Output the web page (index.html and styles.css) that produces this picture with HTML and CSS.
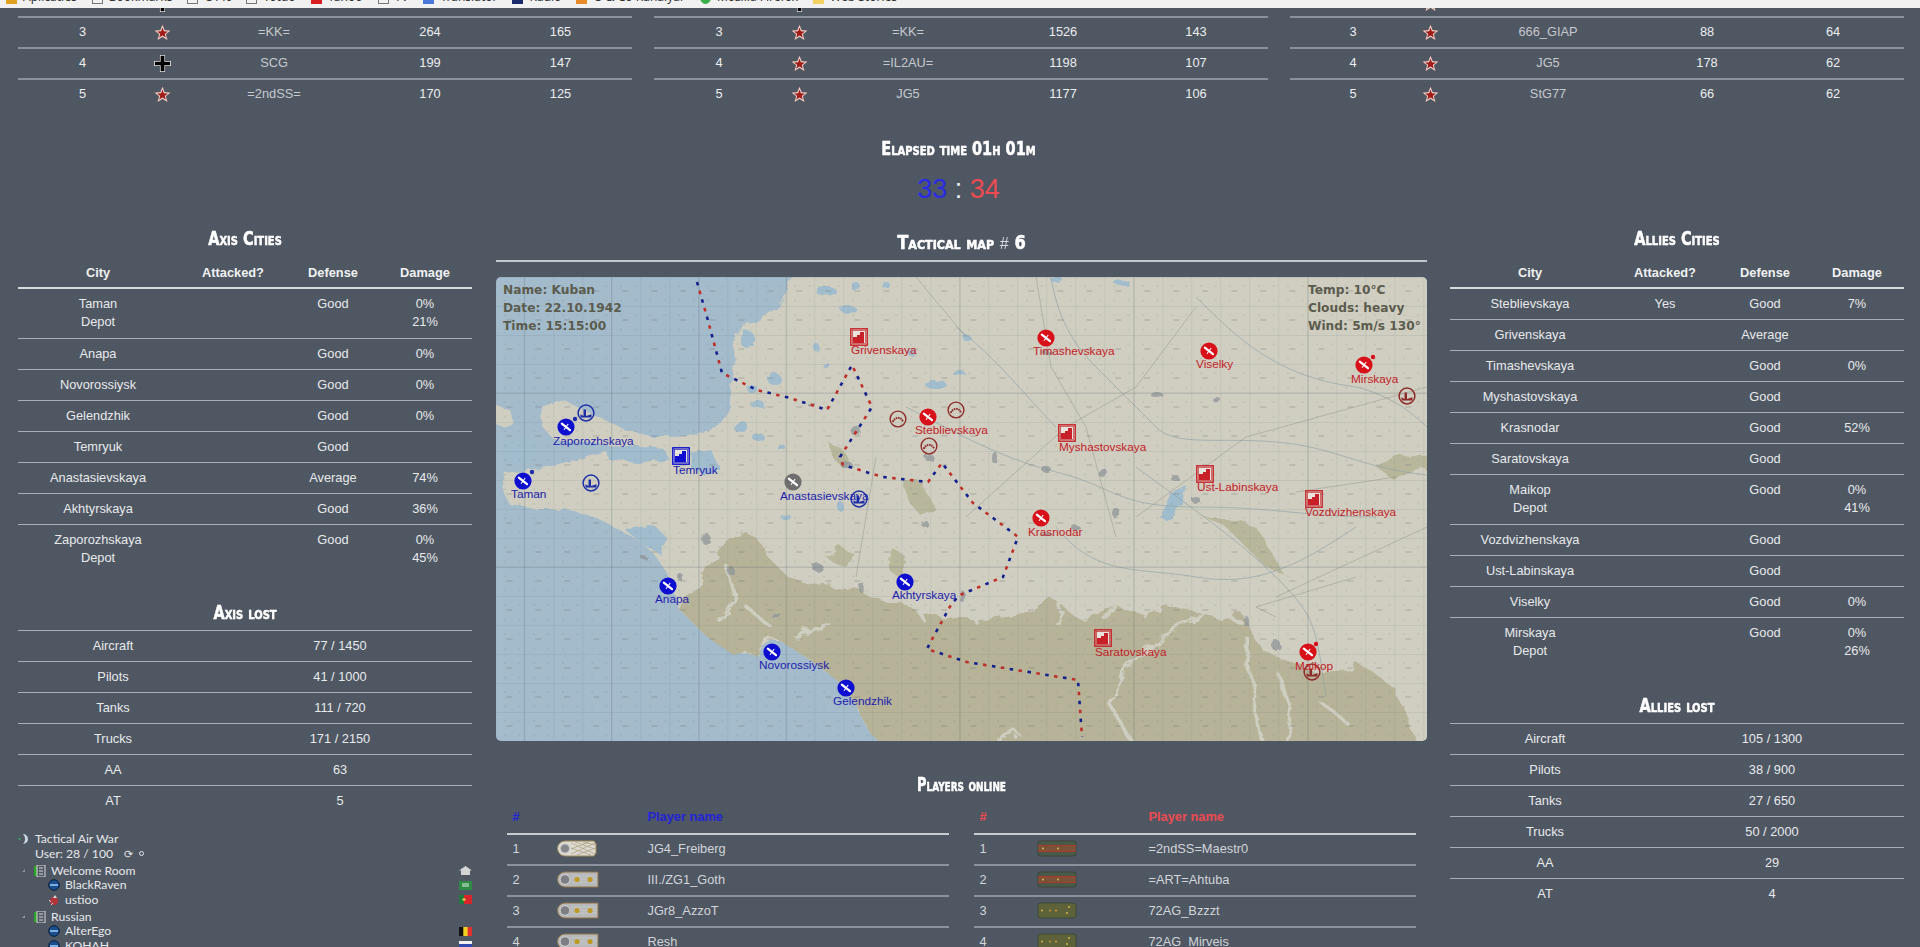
FILE: index.html
```html
<!DOCTYPE html>
<html lang="en">
<head>
<meta charset="utf-8">
<title>Tactical Air War</title>
<link rel="stylesheet" href="styles.css">
</head>
<body>
<svg class="defs" width="0" height="0" aria-hidden="true">
  <defs>
    <symbol id="star" viewBox="0 0 20 20"><path d="M10 .5 12.6 7.2 19.6 7.5 14.1 12 16 19.2 10 15.2 4 19.2 5.900 12 .4 7.5 7.400 7.200Z" fill="#f4eae6" stroke="#7a3a36" stroke-width=".4"/><path d="M10 4 11.700 8.600 16.400 8.800 12.700 11.700 14 16.200 10 13.500 6 16.200 7.300 11.700 3.600 8.800 8.300 8.600Z" fill="#a01c18"/></symbol>
    <symbol id="cross" viewBox="0 0 20 20"><path d="M7 0H13V7H20V13H13V20H7V13H0V7H7Z" fill="#e8e8e8"/><path d="M7.800 1H12.200V7.800H19V12.200H12.200V19H7.800V12.200H1V7.800H7.800Z" fill="#000"/></symbol>
    <symbol id="af" viewBox="-9 -9 18 18"><circle r="8.600" fill="currentColor"/><path d="M-4.200-3.400 4 3.200" stroke="#fff" stroke-width="2.200" stroke-linecap="round"/><path d="M-2 2.800 2.200-3" stroke="#fff" stroke-width="1.100"/></symbol>
    <symbol id="sq" viewBox="0 0 18 18"><rect x=".8" y=".8" width="16.400" height="16.400" fill="none" stroke="currentColor" stroke-width="1.400"/><rect x="2.600" y="2.600" width="12.800" height="12.800" fill="#e8e4dc" stroke="currentColor" stroke-width=".6"/><path d="M3 15V9H7V7H10V4H14V15Z" fill="currentColor"/></symbol>
    <symbol id="depot" viewBox="-9 -9 18 18"><circle r="7.900" fill="none" stroke="currentColor" stroke-width="1.500"/><path d="M-5.500 4.500V1.200L-2.500 3V-3.500H0V3L5.500 1.200V4.500Z" fill="currentColor"/></symbol>
    <symbol id="ring" viewBox="-9 -9 18 18"><circle r="7.900" fill="none" stroke="currentColor" stroke-width="1.400"/><path d="M-5.200 2.800C-3-2.500 3-2.500 5.200 2.800" fill="none" stroke="currentColor" stroke-width="2" stroke-dasharray="1.600 .7"/></symbol>
    <symbol id="r-de0" viewBox="0 0 42 17"><path d="M8 1H37L39 4V13L37 16H8A7.500 7.500 0 0 1 8 1Z" fill="#dcdad2" stroke="#9c8758"/><circle cx="8" cy="8.500" r="4.500" fill="#85878b" stroke="#c8c8c8"/><path d="M14 3 38 14M14 8 34 15M18 2 38 9M26 2 38 5M14 14 38 3M14 9 32 2M20 15 38 8" stroke="#a89c78" stroke-width=".7"/></symbol>
    <symbol id="r-de1" viewBox="0 0 42 17"><path d="M8 1H41V16H8A7.500 7.500 0 0 1 8 1Z" fill="#b8b9ba" stroke="#8f7348"/><circle cx="8" cy="8.500" r="4.800" fill="#7d7f84" stroke="#d0d0d0"/><path d="M15 5H40M15 8H40M15 11H40" stroke="#cfcfcf" stroke-width=".6"/><circle cx="20" cy="8.500" r="2.600" fill="#bd9a26"/><circle cx="33" cy="8.500" r="2.600" fill="#bd9a26"/></symbol>
    <symbol id="r-ru0" viewBox="0 0 42 17"><path d="M2 2 5 1H37L40 2V15L37 16H5L2 15Z" fill="#4a5a49" stroke="#3a463a"/><rect x="2" y="5.500" width="38" height="6" fill="#7a5238"/><path d="M2 5.500H40M2 11.500H40" stroke="#a83a2c" stroke-width="1.200"/><circle cx="7" cy="8.500" r="1" fill="#d4b450"/><circle cx="22" cy="8.500" r="1" fill="#d4b450"/></symbol>
    <symbol id="r-ru1" viewBox="0 0 42 17"><path d="M2 2 5 1H37L40 2V15L37 16H5L2 15Z" fill="#5e6239" stroke="#3e4a3c"/><circle cx="6" cy="8.500" r="1" fill="#d4b450"/><circle cx="14" cy="8.500" r="1" fill="#c89a40"/><circle cx="20" cy="8.500" r="1" fill="#c89a40"/><circle cx="31" cy="11" r="1" fill="#d4b450"/><circle cx="33" cy="5" r="1" fill="#d4b450"/></symbol>
    <symbol id="ts-room" viewBox="0 0 12 12"><rect x="0" y="1" width="3" height="10" fill="#2aa52a"/><rect x="3" y="0" width="8" height="12" fill="none" stroke="#dcdcdc"/><path d="M5 3H9M5 6H9M5 9H9" stroke="#dcdcdc"/></symbol>
    <symbol id="ts-user" viewBox="0 0 12 12"><circle cx="6" cy="6" r="5.300" fill="#1a4e8e" stroke="#0a1e3e"/><rect x="2" y="5" width="8" height="2" fill="#7eb0e0"/></symbol>
    <symbol id="ts-bug" viewBox="0 0 12 12"><circle cx="6" cy="7" r="4" fill="#b4343c"/><path d="M7 1 9 4 5 4Z" fill="#d8d8d8"/><path d="M1 6 3 8M3 11 5 9" stroke="#d8d8d8"/></symbol>
  </defs>
</svg>

<div class="chrome">
  <div class="bookmarks">
    <i class="mark m-apps"></i><span>Aplicaties</span>
    <i class="mark m-grey"></i><span>Bookmarks</span>
    <i class="mark m-grey"></i><span>OTTI</span>
    <i class="mark m-grey"></i><span>Yotuo</span>
    <i class="mark m-red"></i><span>Yahoo</span>
    <i class="mark m-grey"></i><span>TV</span>
    <i class="mark m-blue"></i><span>Translator</span>
    <i class="mark m-navy"></i><span>Radio</span>
    <i class="mark m-orange"></i><span>O &amp; Co Kanalyar</span>
    <i class="mark m-green"></i><span>Mozilla Firefox</span>
    <i class="mark m-yellow"></i><span>Web Stories</span>
  </div>
</div>

<section class="top-tables">
  <table class="rank t1">
    <colgroup><col class="c1"><col class="c2"><col class="c3"><col class="c4"><col class="c5"></colgroup>
    <tr class="peek"><td></td><td><div class="peek-box"><svg class="flag"><use href="#cross"/></svg></div></td><td></td><td></td><td></td></tr>
    <tr><td>3</td><td><svg class="flag"><use href="#star"/></svg></td><td class="dim">=KK=</td><td>264</td><td>165</td></tr>
    <tr><td>4</td><td><svg class="flag"><use href="#cross"/></svg></td><td class="dim">SCG</td><td>199</td><td>147</td></tr>
    <tr><td>5</td><td><svg class="flag"><use href="#star"/></svg></td><td class="dim">=2ndSS=</td><td>170</td><td>125</td></tr>
  </table>
  <table class="rank t2">
    <colgroup><col class="c1"><col class="c2"><col class="c3"><col class="c4"><col class="c5"></colgroup>
    <tr class="peek"><td></td><td><div class="peek-box"><svg class="flag"><use href="#cross"/></svg></div></td><td></td><td></td><td></td></tr>
    <tr><td>3</td><td><svg class="flag"><use href="#star"/></svg></td><td class="dim">=KK=</td><td>1526</td><td>143</td></tr>
    <tr><td>4</td><td><svg class="flag"><use href="#star"/></svg></td><td class="dim">=IL2AU=</td><td>1198</td><td>107</td></tr>
    <tr><td>5</td><td><svg class="flag"><use href="#star"/></svg></td><td class="dim">JG5</td><td>1177</td><td>106</td></tr>
  </table>
  <table class="rank t3">
    <colgroup><col class="c1"><col class="c2"><col class="c3"><col class="c4"><col class="c5"></colgroup>
    <tr class="peek"><td></td><td><div class="peek-box"><svg class="flag"><use href="#star"/></svg></div></td><td></td><td></td><td></td></tr>
    <tr><td>3</td><td><svg class="flag"><use href="#star"/></svg></td><td class="dim">666_GIAP</td><td>88</td><td>64</td></tr>
    <tr><td>4</td><td><svg class="flag"><use href="#star"/></svg></td><td class="dim">JG5</td><td>178</td><td>62</td></tr>
    <tr><td>5</td><td><svg class="flag"><use href="#star"/></svg></td><td class="dim">StG77</td><td>66</td><td>62</td></tr>
  </table>
</section>

<section class="elapsed">
  <h2 class="head">Elapsed time 01h 01m</h2>
  <div class="score"><span class="s-blue">33</span> : <span class="s-red">34</span></div>
</section>

<main class="board">
  <aside class="side">
    <h2 class="head side-head">Axis Cities</h2>
    <table class="cities">
      <colgroup><col class="k1"><col class="k2"><col class="k3"><col class="k4"></colgroup>
      <tr><th>City</th><th>Attacked?</th><th>Defense</th><th>Damage</th></tr>
      <tr class="double"><td>Taman<br>Depot</td><td></td><td>Good</td><td>0%<br>21%</td></tr>
      <tr><td>Anapa</td><td></td><td>Good</td><td>0%</td></tr>
      <tr><td>Novorossiysk</td><td></td><td>Good</td><td>0%</td></tr>
      <tr><td>Gelendzhik</td><td></td><td>Good</td><td>0%</td></tr>
      <tr><td>Temryuk</td><td></td><td>Good</td><td></td></tr>
      <tr><td>Anastasievskaya</td><td></td><td>Average</td><td>74%</td></tr>
      <tr><td>Akhtyrskaya</td><td></td><td>Good</td><td>36%</td></tr>
      <tr class="double"><td>Zaporozhskaya<br>Depot</td><td></td><td>Good</td><td>0%<br>45%</td></tr>
    </table>
    <h2 class="head lost-head">Axis lost</h2>
    <table class="lost">
      <colgroup><col class="l1"><col class="l2"></colgroup>
      <tr><td>Aircraft</td><td>77 / 1450</td></tr>
      <tr><td>Pilots</td><td>41 / 1000</td></tr>
      <tr><td>Tanks</td><td>111 / 720</td></tr>
      <tr><td>Trucks</td><td>171 / 2150</td></tr>
      <tr><td>AA</td><td>63</td></tr>
      <tr><td>AT</td><td>5</td></tr>
    </table>
    <div class="ts">
      <div class="ts-row ts-l0"><svg class="ts-ico ts-logo" viewBox="0 0 12 12"><circle cx="1.500" cy="6" r="1" fill="#39b36a"/><path d="M5 1A5 5 0 0 1 5 11A7 7 0 0 0 5 1Z" fill="#c9d6e4"/></svg>Tactical Air War</div>
      <div class="ts-row ts-user">User: 28 / 100<span class="ts-refresh">&#10227;</span><span class="ts-dot"></span></div>
      <div class="ts-row ts-l1 ts-room"><span class="ts-arrow"></span><svg class="ts-ico"><use href="#ts-room"/></svg>Welcome Room<svg class="ts-flag" viewBox="0 0 13 9"><path d="M6.500 0 13 4.500H11V9H2V4.500H0Z" fill="#d4d4d4"/></svg></div>
      <div class="ts-row ts-l2"><svg class="ts-ico"><use href="#ts-user"/></svg>BlackRaven<svg class="ts-flag" viewBox="0 0 13 9"><rect width="13" height="9" fill="#2f8a46"/><path d="M3 3H10M3 5H10" stroke="#dfeee0"/></svg></div>
      <div class="ts-row ts-l2"><svg class="ts-ico"><use href="#ts-bug"/></svg>ustioo<svg class="ts-flag" viewBox="0 0 13 9"><rect width="13" height="9" fill="#d8262c"/><rect width="5" height="9" fill="#1f7a3c"/><circle cx="5" cy="4.500" r="1.600" fill="#e0c040"/></svg></div>
      <div class="ts-row ts-l1 ts-room"><span class="ts-arrow"></span><svg class="ts-ico"><use href="#ts-room"/></svg>Russian</div>
      <div class="ts-row ts-l2"><svg class="ts-ico"><use href="#ts-user"/></svg>AlterEgo<svg class="ts-flag" viewBox="0 0 13 9"><rect width="13" height="9" fill="#e03030"/><rect width="8.600" height="9" fill="#f0d020"/><rect width="4.300" height="9" fill="#111"/></svg></div>
      <div class="ts-row ts-l2"><svg class="ts-ico"><use href="#ts-user"/></svg>KOHAH<svg class="ts-flag" viewBox="0 0 13 9"><rect width="13" height="9" fill="#d83030"/><rect width="13" height="6" fill="#3048b0"/><rect width="13" height="3" fill="#f0f0f0"/></svg></div>
    </div>
  </aside>

  <section class="center">
    <h2 class="head map-head">Tactical map <span class="hash">#</span> 6</h2>
    <div class="rule"></div>
    <div class="map">
      <svg class="map-svg" viewBox="0 0 931 464" width="931" height="464" xmlns="http://www.w3.org/2000/svg">
        <defs>
          <pattern id="grid" x="28.300" y="29" width="29" height="29" patternUnits="userSpaceOnUse">
            <path d="M0 0V29M0 0H29" fill="none" stroke="#5c6a70" stroke-opacity=".22"/>
            <rect x="11" y="13" width="6" height="2" fill="#6a7070" fill-opacity=".2"/>
          </pattern>
          <pattern id="dots" x="7" y="7" width="14.500" height="14.500" patternUnits="userSpaceOnUse">
            <circle cx="2" cy="2" r=".55" fill="#4a5656" fill-opacity=".4"/>
          </pattern>
          <filter id="rough" x="-5%" y="-5%" width="110%" height="110%">
            <feTurbulence type="fractalNoise" baseFrequency=".045" numOctaves="4" seed="7" result="n"/>
            <feDisplacementMap in="SourceGraphic" in2="n" scale="16"/>
          </filter>
          <filter id="fine" x="-5%" y="-5%" width="110%" height="110%">
            <feTurbulence type="fractalNoise" baseFrequency=".09" numOctaves="3" seed="3" result="n"/>
            <feDisplacementMap in="SourceGraphic" in2="n" scale="7"/>
            <feGaussianBlur stdDeviation=".35"/>
          </filter>
        </defs>
        <rect class="sea" width="931" height="464"/>
        <g filter="url(#fine)">
          <path class="land" d="M299-6 287 23Q274 40 247 50L237 63 239 83 234 110 234 133 224 150 201 156 181 160 154 160 127 152 94 136 67 123 47 131 45 148 58 163 100 166 125 170 100 178 70 185 44 192 10 196 6 212 14 228 40 232 70 232 100 240 111 246 140 262 157 276 171 296 184 333 207 356 234 375 261 378 271 363 284 363 314 383 341 403 357 423 374 456 394 470H937V-6Z"/>
          <path class="land" d="M-5 126 15 134 18 146 6 150-5 146Z"/>
        </g>
        <g filter="url(#rough)">
          <path class="tan" d="M184 333 186 320 200 318 212 290 228 268 246 252 262 262 272 280 292 300 320 308 360 312 400 328 440 340 490 342 530 338 555 322 590 346 620 328 650 338 680 328 720 342 745 335 765 372 800 388 830 398 860 384 900 412 925 475H394L374 456 357 423 341 403 314 383 284 363 271 363 261 378 234 375 207 356Z"/>
          <path class="tan-soft" d="M335 168 350 176 356 190 346 190 336 180Z"/>
          <path class="tan-soft" d="M408 205 428 205 438 232 424 238 412 224Z"/>
          <path class="tan-soft" d="M880 190 905 180 935 178 935 190 895 200Z"/>
          <path class="tan-soft" d="M395 270 410 280 405 300 392 292Z"/>
          <path class="tan-soft" d="M330 280 345 270 360 278 350 290Z"/>
          <path class="tan-soft" d="M700 235 760 250 790 300 770 290 730 250Z"/>
        </g>
        <g class="water" filter="url(#fine)">
          <path d="M110 172 138 168 168 172 172 182 140 186 112 182Z"/>
          <path d="M194 176 214 172 224 190 208 198 196 192Z"/>
          <path d="M128 252 160 250 172 262 165 278 150 270Z"/>
          <path d="M10 166 36 160 44 176 22 190 8 182Z"/>
          <path d="M664 240 678 214 690 208 686 226 672 244Z"/>
          <ellipse cx="330" cy="14" rx="10" ry="5"/><ellipse cx="352" cy="32" rx="8" ry="4"/><ellipse cx="360" cy="10" rx="4" ry="5"/>
          <ellipse cx="251" cy="62" rx="7" ry="9"/><ellipse cx="278" cy="102" rx="7" ry="6"/><ellipse cx="256" cy="112" rx="5" ry="4"/><ellipse cx="262" cy="128" rx="7" ry="4"/>
          <ellipse cx="320" cy="70" rx="3" ry="4"/><ellipse cx="330" cy="88" rx="3" ry="3"/>
          <ellipse cx="440" cy="108" rx="11" ry="4"/><ellipse cx="462" cy="95" rx="6" ry="3"/>
          <ellipse cx="390" cy="8" rx="4" ry="3"/><ellipse cx="626" cy="6" rx="8" ry="3"/><ellipse cx="560" cy="2" rx="6" ry="3"/>
          <ellipse cx="290" cy="240" rx="5" ry="3"/><ellipse cx="345" cy="230" rx="3" ry="5"/>
          <ellipse cx="245" cy="150" rx="8" ry="5"/><ellipse cx="262" cy="160" rx="6" ry="4"/><ellipse cx="285" cy="170" rx="4" ry="3"/>
          <ellipse cx="470" cy="60" rx="4" ry="3"/><ellipse cx="415" cy="75" rx="5" ry="3"/>
        </g>
        <g class="rivers-light" filter="url(#rough)">
          <path d="M540 330 548 310 535 290M560 345 575 318 570 290M612 345 628 310 622 290M650 340 660 315M700 350 715 330 745 345M770 470 758 420 750 360M790 470 795 430 780 395M640 470 612 425 630 395 665 360 700 345M480 345 470 325M430 345 420 330M850 445 825 425M500 470 520 455M225 345 240 320 232 290M250 330 275 350M300 360 330 345"/>
        </g>
        <g class="rivers">
          <path d="M555 0C560 30 570 60 600 90S640 130 660 150 720 160 780 165 860 190 931 198"/>
          <path d="M640 190C680 220 740 260 780 300S820 350 830 420"/>
          <path d="M410 130C450 150 500 180 560 195S620 230 700 230 810 240 880 240"/>
          <path d="M460 50C500 80 530 120 560 150M700 20C740 60 780 100 860 110 900 120 920 140 931 150"/>
          <path d="M560 250C600 300 640 290 700 300 760 310 800 290 860 250"/>
        </g>
        <g class="roads">
          <path d="M540 0 555 90 590 150 620 260M360 300 380 180M640 240 750 160 931 110M700 30 640 110 570 150 470 240M780 320 931 250M780 340 760 330 860 300M420 0 470 60M900 200 800 215"/>
        </g>
        <g class="towns" filter="url(#fine)">
          <ellipse cx="552" cy="76" rx="6" ry="2"/><ellipse cx="660" cy="117" rx="6" ry="3"/><ellipse cx="720" cy="122" rx="4" ry="2"/>
          <ellipse cx="498" cy="180" rx="3" ry="6"/><ellipse cx="550" cy="192" rx="5" ry="3"/><ellipse cx="607" cy="196" rx="4" ry="5"/><ellipse cx="679" cy="201" rx="4" ry="3"/>
          <ellipse cx="360" cy="154" rx="5" ry="5"/><ellipse cx="351" cy="188" rx="6" ry="3"/><ellipse cx="317" cy="129" rx="4" ry="2"/>
          <ellipse cx="433" cy="180" rx="5" ry="3"/><ellipse cx="467" cy="320" rx="3" ry="6"/><ellipse cx="750" cy="344" rx="3" ry="5"/>
          <ellipse cx="780" cy="368" rx="5" ry="5"/><ellipse cx="322" cy="291" rx="5" ry="5"/><ellipse cx="365" cy="310" rx="4" ry="4"/>
          <ellipse cx="210" cy="262" rx="4" ry="6"/><ellipse cx="147" cy="280" rx="3" ry="2"/><ellipse cx="184" cy="300" rx="3" ry="4"/>
          <ellipse cx="235" cy="294" rx="3" ry="5"/><ellipse cx="280" cy="338" rx="5" ry="2"/><ellipse cx="551" cy="258" rx="6" ry="2"/><ellipse cx="580" cy="251" rx="4" ry="3"/>
          <ellipse cx="620" cy="236" rx="4" ry="5"/><ellipse cx="428" cy="246" rx="4" ry="3"/><ellipse cx="700" cy="223" rx="5" ry="3"/>
        </g>
        <rect width="931" height="464" fill="url(#grid)"/>
        <rect width="931" height="464" fill="url(#dots)"/>
        <g class="grid-major">
          <path d="M115.700 0V464M290.700 0V464M464 0V464M638 0V464M812 0V464M28.300 0V464M203 0V464M0 116H931M0 290H931"/>
        </g>
        <polyline class="front f-blue" points="201,5 211,40 226,96 261,113 294,121 331,133 356,88 376,130 344,180 347,188 387,200 432,205 446,186 477,226 517,256 522,260 507,300 464,318 456,326 434,366 431,372 471,385 582,403 586,460"/>
        <polyline class="front f-red" points="201,5 211,40 226,96 261,113 294,121 331,133 356,88 376,130 344,180 347,188 387,200 432,205 446,186 477,226 517,256 522,260 507,300 464,318 456,326 434,366 431,372 471,385 582,403 586,460"/>

        <g class="axis">
          <use href="#depot" x="81" y="127" width="18" height="18"/>
          <use href="#depot" x="86" y="197" width="18" height="18"/>
          <use href="#depot" x="354" y="213" width="18" height="18"/>
          <circle cx="79" cy="142" r="2.200" fill="currentColor"/>
          <circle cx="36" cy="195" r="2.200" fill="currentColor"/>
          <use class="axis-bright" href="#af" x="61" y="141" width="18" height="18"/>
          <use class="axis-bright" href="#af" x="18" y="195" width="18" height="18"/>
          <use class="axis-bright" href="#af" x="163" y="300" width="18" height="18"/>
          <use class="axis-bright" href="#af" x="267" y="366" width="18" height="18"/>
          <use class="axis-bright" href="#af" x="341" y="402" width="18" height="18"/>
          <use class="axis-bright" href="#af" x="400" y="296" width="18" height="18"/>
          <use class="neutral" href="#af" x="288" y="196" width="18" height="18"/>
          <use class="axis-bright" href="#sq" x="176" y="170" width="18" height="18"/>
          <text x="57" y="168">Zaporozhskaya</text>
          <text x="15" y="221">Taman</text>
          <text x="177" y="197">Temryuk</text>
          <text x="284" y="223">Anastasievskaya</text>
          <text x="159" y="326">Anapa</text>
          <text x="263" y="392">Novorossiysk</text>
          <text x="337" y="428">Gelendzhik</text>
          <text x="396" y="322">Akhtyrskaya</text>
        </g>
        <g class="allies">
          <use class="dark-red" href="#ring" x="393" y="133" width="18" height="18"/>
          <use class="dark-red" href="#ring" x="451" y="124" width="18" height="18"/>
          <use class="dark-red" href="#ring" x="424" y="160" width="18" height="18"/>
          <use class="dark-red" href="#depot" x="902" y="110" width="18" height="18"/>
          <use class="dark-red" href="#depot" x="807" y="386" width="18" height="18"/>
          <circle cx="877" cy="80" r="2.200" fill="currentColor"/>
          <circle cx="820" cy="367" r="2.200" fill="currentColor"/>
          <use href="#af" x="423" y="131" width="18" height="18"/>
          <use href="#af" x="541" y="52" width="18" height="18"/>
          <use href="#af" x="704" y="65" width="18" height="18"/>
          <use href="#af" x="859" y="79" width="18" height="18"/>
          <use href="#af" x="536" y="232" width="18" height="18"/>
          <use href="#af" x="803" y="366" width="18" height="18"/>
          <use class="sq-red" href="#sq" x="354" y="51" width="18" height="18"/>
          <use class="sq-red" href="#sq" x="562" y="147" width="18" height="18"/>
          <use class="sq-red" href="#sq" x="700" y="188" width="18" height="18"/>
          <use class="sq-red" href="#sq" x="809" y="213" width="18" height="18"/>
          <use class="sq-red" href="#sq" x="598" y="352" width="18" height="18"/>
          <text x="355" y="77">Grivenskaya</text>
          <text x="419" y="157">Steblievskaya</text>
          <text x="537" y="78">Timashevskaya</text>
          <text x="700" y="91">Viselky</text>
          <text x="855" y="106">Mirskaya</text>
          <text x="563" y="174">Myshastovskaya</text>
          <text x="701" y="214">Ust-Labinskaya</text>
          <text x="809" y="239">Vozdvizhenskaya</text>
          <text x="532" y="259">Krasnodar</text>
          <text x="599" y="379">Saratovskaya</text>
          <text x="799" y="393">Maikop</text>
        </g>
        <g class="wx">
          <text x="7" y="17">Name: Kuban</text>
          <text x="7" y="35">Date: 22.10.1942</text>
          <text x="7" y="53">Time: 15:15:00</text>
          <text x="812" y="17">Temp: 10°C</text>
          <text x="812" y="35">Clouds: heavy</text>
          <text x="812" y="53">Wind: 5m/s 130°</text>
        </g>
      </svg>
    </div>
    <h2 class="head players-head">Players online</h2>
    <div class="players">
      <table class="roster ro-axis">
        <colgroup><col class="p1"><col class="p2"><col></colgroup>
        <tr><th>#</th><th></th><th>Player name</th></tr>
        <tr><td>1</td><td><svg class="board-ico"><use href="#r-de0"/></svg></td><td>JG4_Freiberg</td></tr>
        <tr><td>2</td><td><svg class="board-ico"><use href="#r-de1"/></svg></td><td>III./ZG1_Goth</td></tr>
        <tr><td>3</td><td><svg class="board-ico"><use href="#r-de1"/></svg></td><td>JGr8_AzzoT</td></tr>
        <tr><td>4</td><td><svg class="board-ico"><use href="#r-de1"/></svg></td><td>Resh</td></tr>
      </table>
      <table class="roster ro-allies">
        <colgroup><col class="p1"><col class="p2"><col></colgroup>
        <tr><th>#</th><th></th><th>Player name</th></tr>
        <tr><td>1</td><td><svg class="board-ico"><use href="#r-ru0"/></svg></td><td>=2ndSS=Maestr0</td></tr>
        <tr><td>2</td><td><svg class="board-ico"><use href="#r-ru0"/></svg></td><td>=ART=Ahtuba</td></tr>
        <tr><td>3</td><td><svg class="board-ico"><use href="#r-ru1"/></svg></td><td>72AG_Bzzzt</td></tr>
        <tr><td>4</td><td><svg class="board-ico"><use href="#r-ru1"/></svg></td><td>72AG_Mirveis</td></tr>
      </table>
    </div>
  </section>

  <aside class="side">
    <h2 class="head side-head">Allies Cities</h2>
    <table class="cities">
      <colgroup><col class="k1"><col class="k2"><col class="k3"><col class="k4"></colgroup>
      <tr><th>City</th><th>Attacked?</th><th>Defense</th><th>Damage</th></tr>
      <tr><td>Steblievskaya</td><td>Yes</td><td>Good</td><td>7%</td></tr>
      <tr><td>Grivenskaya</td><td></td><td>Average</td><td></td></tr>
      <tr><td>Timashevskaya</td><td></td><td>Good</td><td>0%</td></tr>
      <tr><td>Myshastovskaya</td><td></td><td>Good</td><td></td></tr>
      <tr><td>Krasnodar</td><td></td><td>Good</td><td>52%</td></tr>
      <tr><td>Saratovskaya</td><td></td><td>Good</td><td></td></tr>
      <tr class="double"><td>Maikop<br>Depot</td><td></td><td>Good</td><td>0%<br>41%</td></tr>
      <tr><td>Vozdvizhenskaya</td><td></td><td>Good</td><td></td></tr>
      <tr><td>Ust-Labinskaya</td><td></td><td>Good</td><td></td></tr>
      <tr><td>Viselky</td><td></td><td>Good</td><td>0%</td></tr>
      <tr class="double"><td>Mirskaya<br>Depot</td><td></td><td>Good</td><td>0%<br>26%</td></tr>
    </table>
    <h2 class="head lost-head">Allies lost</h2>
    <table class="lost">
      <colgroup><col class="l1"><col class="l2"></colgroup>
      <tr><td>Aircraft</td><td>105 / 1300</td></tr>
      <tr><td>Pilots</td><td>38 / 900</td></tr>
      <tr><td>Tanks</td><td>27 / 650</td></tr>
      <tr><td>Trucks</td><td>50 / 2000</td></tr>
      <tr><td>AA</td><td>29</td></tr>
      <tr><td>AT</td><td>4</td></tr>
    </table>
  </aside>
</main>
</body>
</html>
```
FILE: styles.css
```css
* { box-sizing: border-box; }
html, body { margin: 0; height: 947px; overflow: hidden; }
body {
  background: #4f5763;
  color: #eceeef;
  font: 12.8px/18px "Liberation Sans", Arial, sans-serif;
}
.defs { position: absolute; }
table { border-collapse: separate; border-spacing: 0; table-layout: fixed; width: 100%; }
td, th { padding: 0; text-align: center; vertical-align: top; }

/* browser bookmark strip, cut off by the page */
.chrome { height: 8px; background: #f1f1f1; overflow: hidden; }
.bookmarks {
  display: flex; align-items: center; gap: 6px;
  margin: -11px 0 0 6px; height: 16px;
  font: 12px/16px "Noto Sans", sans-serif; color: #333;
}
.bookmarks span { margin-right: 9px; }
.mark { width: 11px; height: 13px; display: block; background: #999; }
.m-apps { background: #e0a020; }
.m-grey { background: transparent; border: 1px solid #777; }
.m-red { background: #d81e1e; }
.m-blue { background: #4a78d8; }
.m-navy { background: #1a2a6a; }
.m-orange { background: #e88a2a; }
.m-green { background: #3ab04a; border-radius: 50%; }
.m-yellow { background: #f3d060; }

/* top ranking tables */
.top-tables { display: grid; grid-template-columns: repeat(3, 1fr); gap: 22px; padding: 0 16px 0 18px; }
.rank td { height: 31px; padding-top: 5px; border-bottom: 2px solid #8b929d; line-height: 18px; color: #eceeef; }
.rank tr:last-child td { border-bottom: 0; }
.rank td.dim { color: #c6c9cd; }
.rank .peek td { height: 10px; padding: 0; }
.peek-box { height: 8px; overflow: hidden; position: relative; }
.peek-box .flag { position: absolute; left: 50%; margin-left: -8px; top: -14px; }
.flag { width: 17px; height: 17px; display: block; margin: 1px auto 0; }
.t1 .c1 { width: 129px; } .t1 .c2 { width: 30px; } .t1 .c3 { width: 194px; } .t1 .c4 { width: 118px; }
.t2 .c1 { width: 130px; } .t2 .c2 { width: 30px; } .t2 .c3 { width: 188px; } .t2 .c4 { width: 122px; }
.t3 .c1 { width: 126px; } .t3 .c2 { width: 28px; } .t3 .c3 { width: 208px; } .t3 .c4 { width: 110px; }

/* headings: a squeezed heavy small-caps face */
.head {
  margin: 0; text-align: center; color: #fff;
  font: bold 19px/22px "DejaVu Sans Condensed", sans-serif;
  font-variant: small-caps;
  -webkit-text-stroke: .5px #fff;
  transform: scaleX(.85);
}
.hash { font-family: "Liberation Sans", sans-serif; font-weight: normal; color: #d8dade; -webkit-text-stroke: 0; font-size: 17px; }

.elapsed { text-align: center; margin-top: 26px; padding-right: 3px; }
.score { margin-top: 15px; font-size: 27px; line-height: 30px; color: #eceeef; }
.s-blue { color: #2a2ae6; }
.s-red { color: #ee4a52; }

/* three-column board */
.board {
  display: grid; grid-template-columns: 454px 931px 454px;
  padding: 0 16px 0 18px; margin-top: 20px; align-items: start;
  justify-content: space-between;
}
.side-head { margin-top: 3px; }
.cities { margin-top: 7px; }
.cities th { height: 33px; padding-top: 8px; font-weight: bold; color: #f0f1f2; border-bottom: 2px solid #d8dbde; }
.cities td { padding: 6px 0; border-bottom: 1px solid #a9aeb6; color: #e8eaec; }
.cities tr.double td { padding-bottom: 7px; }
.cities tr:last-child td { border-bottom: 0; }
.k1 { width: 160px; } .k2 { width: 110px; } .k3 { width: 90px; }
.lost-head { margin-top: 27px; }
.lost { margin-top: 7px; border-top: 1px solid #a9aeb6; }
.lost td { padding: 6px 0; border-bottom: 1px solid #a9aeb6; color: #e8eaec; }
.lost tr:last-child td { border-bottom: 0; }
.l1 { width: 190px; }

/* voice server tree */
.ts { margin-top: 16px; font: 12.2px/14.5px "Lato", "Noto Sans", sans-serif; color: #e6e8ea; }
.ts-row { display: flex; align-items: center; height: 14.5px; }
.ts-l0 { padding-left: 0; }
.ts-user { padding-left: 17px; }
.ts-l1 { padding-left: 4px; }
.ts-l2 { padding-left: 30px; }
.ts-room { margin-top: 2.5px; }
.ts-arrow { width: 0; height: 0; margin-right: 9px; border-style: solid; border-width: 0 0 3px 3px; border-color: transparent transparent #8e949c transparent; }
.ts-ico { width: 12px; height: 12px; flex: none; margin-right: 5px; }
.ts-refresh { margin-left: 11px; font-size: 11px; }
.ts-dot { width: 5px; height: 5px; margin-left: 6px; border: 1px solid #e6e8ea; border-radius: 50%; }
.ts-flag { width: 13px; height: 9px; margin-left: auto; }

/* map column */
.map-head { margin-top: 7px; transform: scaleX(.95); }
.rule { height: 2px; margin-top: 5px; background: #c3c7cc; }
.map { margin-top: 15px; height: 464px; border-radius: 5px; overflow: hidden; }
.map-svg { display: block; }
.sea { fill: #a3bbcb; }
.land { fill: #cfcec0; }
.tan { fill: #b6b398; }
.tan-soft { fill: #b8b79c; }
.water { fill: #a0bccd; }
.rivers-light { fill: none; stroke: #cfcfc1; stroke-width: 3.5; stroke-linecap: round; }
.rivers { fill: none; stroke: #8ea3a8; stroke-width: .9; stroke-opacity: .7; }
.roads { fill: none; stroke: #7d7f78; stroke-width: .7; stroke-opacity: .5; }
.towns { fill: #8f9497; fill-opacity: .75; }
.grid-major { fill: none; stroke: #4f5e66; stroke-opacity: .18; }
.front { fill: none; stroke-width: 2.6; }
.f-blue { stroke: #14208e; stroke-dasharray: 3.5 14.5; }
.f-red { stroke: #c0302a; stroke-dasharray: 3.5 14.5; stroke-dashoffset: -9; }
.axis { color: #1c2fa8; }
.axis text { fill: #2222ae; }
.axis-bright { color: #0e0ed0; }
.neutral { color: #6e6e6e; }
.allies { color: #d8101a; }
.allies text { fill: #c42028; }
.dark-red { color: #8e2a2a; }
.sq-red { color: #c82028; }
.allies text, .axis text { font: 11.8px "Liberation Sans", sans-serif; }
.wx text { font: bold 12.2px "DejaVu Sans", sans-serif; fill: #5b5b4e; }

.players-head { margin-top: 32px; transform: scaleX(.76); }
.players { display: grid; grid-template-columns: 442px 442px; justify-content: space-between; padding: 0 11px; margin-top: 2px; }
.roster th { height: 38px; padding: 11px 0 0 0; text-align: left; font-weight: bold; border-bottom: 2px solid #c9ccd1; }
.roster td { height: 31px; padding-top: 5px; text-align: left; border-bottom: 2px solid #8b929d; color: #d2d5d9; }
.roster td:first-child, .roster th:first-child { padding-left: 6px; }
.ro-axis th { color: #2323d8; }
.ro-allies th { color: #ee4a52; }
.ro-axis .p1 { width: 50px; } .ro-axis .p2 { width: 91px; }
.ro-allies .p1 { width: 62px; } .ro-allies .p2 { width: 113px; }
.board-ico { width: 42px; height: 17px; display: block; }
```
